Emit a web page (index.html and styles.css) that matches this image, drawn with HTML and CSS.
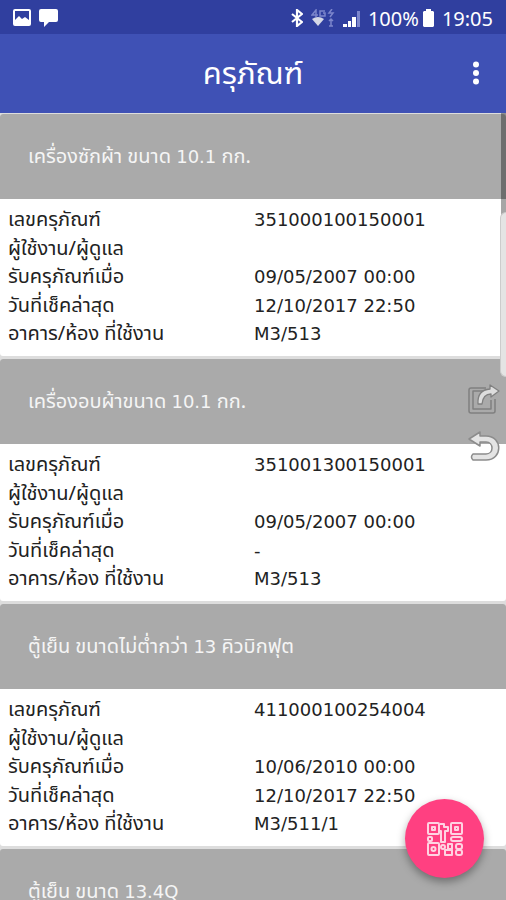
FILE: index.html
```html
<!DOCTYPE html>
<html lang="th">
<head>
<meta charset="utf-8">
<meta name="viewport" content="width=device-width, initial-scale=1">
<title>ครุภัณฑ์</title>
<link rel="stylesheet" href="styles.css">
</head>
<body>
<div class="app">
  <div class="status">
    <div class="status-left">
      <svg width="18" height="17" viewBox="0 0 18 17" aria-hidden="true"><path fill="#fff" fill-rule="evenodd" d="M2 0h14a2 2 0 0 1 2 2v13a2 2 0 0 1-2 2H2a2 2 0 0 1-2-2V2a2 2 0 0 1 2-2zM2 2v9l4-4 3 3 3-2 4 3V2z"/></svg>
      <svg width="19" height="18" viewBox="0 0 19 18" aria-hidden="true"><path fill="#fff" d="M2 0h15a2 2 0 0 1 2 2v9a2 2 0 0 1-2 2h-7l-5 5v-5H2a2 2 0 0 1-2-2V2a2 2 0 0 1 2-2z"/></svg>
    </div>
    <div class="status-right">
      <svg width="12" height="18" viewBox="0 0 12 18" aria-hidden="true"><path fill="none" stroke="#fff" stroke-width="2.200" d="M1 5l10 8-5 4V1l5 4-10 8"/></svg>
      <svg width="24" height="18" viewBox="0 0 24 18" aria-hidden="true"><g fill="none" stroke="#7c86cc" stroke-width="1.500"><path d="M5 8V1L1 6h6M14 2H9v5h5V4h-2M21 0l-3 4h4l-3 4M18 12l2-2 2 2M20 10v7M18 17h4"/></g><path fill="#d5d8e6" d="M1 10q6-4 12 0l-6 7z"/></svg>
      <svg width="18" height="17" viewBox="0 0 18 17" aria-hidden="true"><path fill="#fff" d="M0 14h4v3H0zM5 11h3v6H5zM9 7h4v10H9z"/><path fill="#7c86cc" d="M14 1h3v16h-3z"/></svg>
      <span class="percent">100%</span>
      <svg width="11" height="18" viewBox="0 0 11 18" aria-hidden="true"><path fill="#fff" d="M3 0h5v2h2l1 1v14l-1 1H1l-1-1V3l1-1h2z"/></svg>
      <span class="clock">19:05</span>
    </div>
  </div>
  <header class="bar">
    <h1 class="title">ครุภัณฑ์</h1>
    <button class="more" type="button" aria-label="เมนู"><svg width="8" height="24" viewBox="0 0 8 24" aria-hidden="true"><g fill="#fff"><circle cx="4" cy="3.500" r="3"/><circle cx="4" cy="12" r="3"/><circle cx="4" cy="20.500" r="3"/></g></svg></button>
  </header>
  <main class="list">
    <article class="card">
      <h2 class="card-title">เครื่องซักผ้า ขนาด <span class="num">10.1</span> กก.</h2>
      <dl class="details">
        <dt>เลขครุภัณฑ์</dt><dd>351000100150001</dd>
        <dt>ผู้ใช้งาน/ผู้ดูแล</dt><dd></dd>
        <dt>รับครุภัณฑ์เมื่อ</dt><dd>09/05/2007 00:00</dd>
        <dt>วันที่เช็คล่าสุด</dt><dd>12/10/2017 22:50</dd>
        <dt>อาคาร/ห้อง ที่ใช้งาน</dt><dd>M3/513</dd>
      </dl>
    </article>
    <article class="card">
      <h2 class="card-title">เครื่องอบผ้าขนาด <span class="num">10.1</span> กก.</h2>
      <dl class="details">
        <dt>เลขครุภัณฑ์</dt><dd>351001300150001</dd>
        <dt>ผู้ใช้งาน/ผู้ดูแล</dt><dd></dd>
        <dt>รับครุภัณฑ์เมื่อ</dt><dd>09/05/2007 00:00</dd>
        <dt>วันที่เช็คล่าสุด</dt><dd>-</dd>
        <dt>อาคาร/ห้อง ที่ใช้งาน</dt><dd>M3/513</dd>
      </dl>
    </article>
    <article class="card">
      <h2 class="card-title">ตู้เย็น ขนาดไม่ต่ำกว่า <span class="num">13</span> คิวบิกฟุต</h2>
      <dl class="details">
        <dt>เลขครุภัณฑ์</dt><dd>411000100254004</dd>
        <dt>ผู้ใช้งาน/ผู้ดูแล</dt><dd></dd>
        <dt>รับครุภัณฑ์เมื่อ</dt><dd>10/06/2010 00:00</dd>
        <dt>วันที่เช็คล่าสุด</dt><dd>12/10/2017 22:50</dd>
        <dt>อาคาร/ห้อง ที่ใช้งาน</dt><dd>M3/511/1</dd>
      </dl>
    </article>
    <article class="card">
      <h2 class="card-title">ตู้เย็น ขนาด <span class="num">13.4Q</span></h2>
    </article>
    <div class="scroll-thumb"></div>
    <div class="edge-handle"></div>
    <div class="edge-tools">
      <button type="button" aria-label="แชร์"><svg width="32" height="32" viewBox="0 0 32 32" aria-hidden="true"><g fill="none" stroke="#808080" stroke-linejoin="round"><path d="M18 4H3Q1 4 1 6v21q0 2 2 2h22q2 0 2-2V15" stroke-width="1.500"/><path d="M15 7H5v18h18v-9" stroke-width="1.500"/></g><path d="M10 20Q9 6 22 5V1l9 6-8 6v-3q-8 0-9 10z" fill="#ddd" stroke="#808080" stroke-width="1.300" stroke-linejoin="round"/></svg></button>
      <button type="button" aria-label="ย้อนกลับ"><svg width="32" height="32" viewBox="0 0 32 32" aria-hidden="true"><path d="M1 8l11-7v4h6c17 0 17 24 0 24H5q-3-3 0-6h13c8 0 8-12 0-12h-6v4z" fill="#e4e4e4" stroke="#8c8c8c" stroke-width="1.500" stroke-linejoin="round"/></svg></button>
    </div>
  </main>
  <button class="fab" type="button" aria-label="สแกน QR">
    <svg width="36" height="34" viewBox="0 0 36 34" aria-hidden="true"><g fill="none" stroke="#ffd3e2" stroke-width="2" stroke-linejoin="round"><rect x="1" y="1" width="11" height="11" rx="1"/><rect x="5" y="5" width="3" height="3"/><rect x="24" y="1" width="11" height="11" rx="1"/><rect x="28" y="5" width="3" height="3"/><rect x="1" y="21" width="11" height="12" rx="1"/><circle cx="6.500" cy="27" r="2"/><rect x="1" y="15" width="4" height="4" rx="1"/><path d="M13 2h4v3h4v4h-3v11h-4V9h-2"/><rect x="24" y="15" width="11" height="4" rx="2"/><circle cx="16" cy="25" r="2"/><path d="M21 22h4v5h-4zM18 28h7v5h-7z"/><rect x="29" y="22" width="6" height="5" rx="2"/><rect x="29" y="28" width="6" height="5" rx="2"/></g></svg>
  </button>
</div>
</body>
</html>
```
FILE: styles.css
```css
* { box-sizing: border-box; }
body {
  margin: 0;
  background: #fff;
  font-family: "DejaVu Sans", "Noto Sans Thai", "Noto Sans", sans-serif;
  font-size: 18px;
  color: #222;
}
h1, h2, dl, dd { margin: 0; font-weight: 400; }
button { padding: 0; border: 0; background: none; cursor: pointer; }
svg { display: block; }
.app {
  display: flex;
  flex-direction: column;
  height: 100vh;
  overflow: hidden;
}
.status {
  flex: none;
  display: flex;
  justify-content: space-between;
  align-items: center;
  height: 34px;
  padding: 2px 13px 0;
  background: #303f9f;
  color: #fff;
  font-family: "Noto Sans", sans-serif;
  font-size: 20px;
}
.status-left { display: flex; gap: 8px; }
.status-right { display: flex; align-items: center; gap: 8px; }
.status-right .percent { margin: 0 -4px 0 -1px; }
.bar {
  flex: none;
  display: grid;
  grid-template-columns: 60px 1fr 60px;
  align-items: center;
  height: 79px;
  padding-bottom: 2px;
  background: #3f51b5;
  color: #fff;
}
.title {
  grid-column: 2;
  text-align: center;
  font-size: 31px;
  line-height: 40px;
}
.more {
  display: flex;
  justify-content: center;
  align-items: center;
  height: 48px;
}
.list {
  position: relative;
  flex: 1;
  min-height: 0;
  display: flex;
  flex-direction: column;
  gap: 3px;
  padding-top: 1px;
  overflow: hidden;
  background: #ddd;
}
.card {
  flex: none;
  overflow: hidden;
  border-radius: 3px;
  background: #fff;
}
.card-title {
  height: 85px;
  padding: 0 28px;
  background: #aaa;
  color: #f5f5f5;
  font-family: "Noto Sans Thai", "Noto Sans", sans-serif;
  font-size: 20px;
  line-height: 85px;
  white-space: nowrap;
}
.num {
  font-family: "DejaVu Sans", sans-serif;
  font-size: 18px;
}
.details {
  display: grid;
  grid-template-columns: 1fr 1fr;
  grid-template-rows: repeat(5, 1fr);
  column-gap: 2px;
  height: 157px;
  padding: 7px 8px;
  line-height: 28px;
}
.details dt {
  font-family: "Noto Sans Thai", "Noto Sans", sans-serif;
  font-size: 20px;
  white-space: nowrap;
}
.scroll-thumb {
  position: absolute;
  top: 0;
  right: 0;
  width: 5px;
  height: 104px;
  background: rgba(0, 0, 0, 0.35);
}
.edge-handle {
  position: absolute;
  top: 99px;
  right: 0;
  width: 6px;
  height: 165px;
  border: 1px solid #ccc;
  border-right: 0;
  border-radius: 6px 0 0 6px;
  background: #e4e4e4;
}
.edge-tools {
  position: absolute;
  top: 271px;
  right: 6px;
  display: grid;
  gap: 15px;
}
.fab {
  position: absolute;
  right: 22px;
  bottom: 22px;
  display: grid;
  place-items: center;
  width: 79px;
  height: 79px;
  border-radius: 50%;
  background: #ff4081;
  box-shadow: 0 4px 8px rgba(0, 0, 0, 0.35);
}
```
